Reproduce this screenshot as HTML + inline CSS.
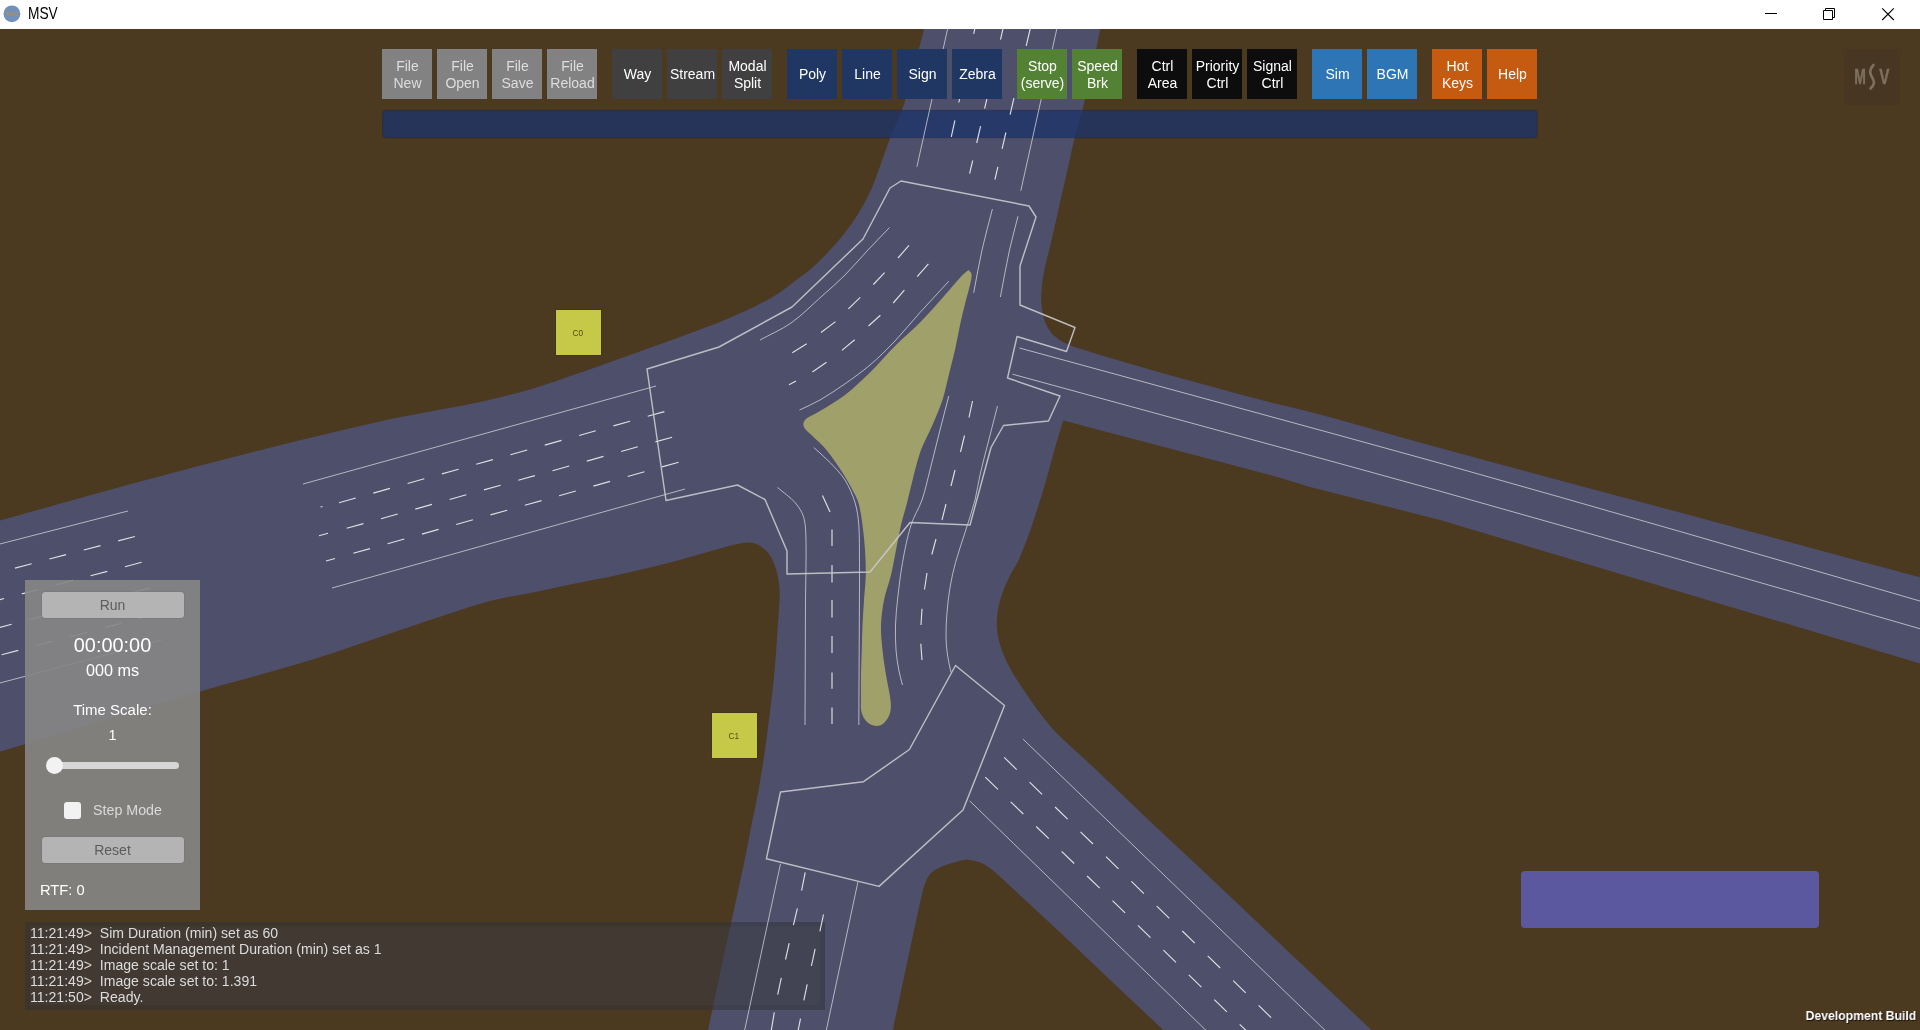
<!DOCTYPE html>
<html lang="en"><head><meta charset="utf-8"><title>MSV</title>
<style>
*{box-sizing:border-box;margin:0;padding:0}
html,body{width:1920px;height:1030px;overflow:hidden;background:#4b3920;font-family:"Liberation Sans",Arial,sans-serif}
#app{position:relative;width:1920px;height:1030px;overflow:hidden;background:#4b3920}
.scene{position:absolute;left:0;top:0}
#title{will-change:transform;position:absolute;left:0;top:0;width:1920px;height:29px;background:#fff}
#title .name{position:absolute;left:27.6px;top:4.3px;font-size:15.7px;line-height:20px;color:#000;transform:scaleX(0.875);transform-origin:left center}
#title svg{position:absolute;left:0;top:0}
.tb{will-change:transform;position:absolute;top:49px;width:50px;height:50px;display:flex;align-items:center;justify-content:center;text-align:center;font-size:14px;line-height:17px;color:#fff;padding-top:1px;padding-left:1px}
.g1{background:#828282;color:#dedede}
.g2{background:#404040}
.g3{background:#203764}
.g4{background:#548235}
.g5{background:#0d0d0d}
.g6{background:#2e75b6}
.g7{background:#c55a11}
#logo{will-change:transform;position:absolute;left:1844px;top:49px;width:56px;height:56px;background:#463622}
#panel{will-change:transform;position:absolute;left:25px;top:580px;width:175px;height:330px;background:rgba(133,133,134,0.915);color:#fff;text-align:center}
#panel .btn{position:absolute;left:16.5px;width:142px;height:27px;border-radius:3px;background:#b4b4b4;color:#5c5c5c;font-size:14px;line-height:27px;box-shadow:0 0 1px rgba(60,60,60,.6)}
#panel .t{position:absolute;left:0;width:175px;white-space:nowrap}
#log{will-change:transform;position:absolute;left:25px;top:922px;width:800px;height:88px}
#log .tx{position:absolute;left:5px;top:3px;font-size:14.08px;line-height:16px;color:#dcdcdc;white-space:pre}
#pbox{position:absolute;left:1521.2px;top:871.3px;width:297.5px;height:57px;border-radius:4px;background:#5c58a0}
#dev{will-change:transform;position:absolute;right:3.5px;top:1006.6px;font-size:13.5px;line-height:18px;font-weight:bold;color:#fff;text-shadow:1px 1px 1px rgba(0,0,0,.7);transform:scaleX(0.905);transform-origin:right center;white-space:nowrap}
.ysq{position:absolute;width:45px;height:45px;background:#c6c848;color:#50501a;font-size:8.3px;line-height:46px;text-align:center;padding-right:1.4px;will-change:transform;box-shadow:0 0 1px rgba(40,30,10,.9)}
</style></head>
<body><div id="app">
<svg class="scene" width="1920" height="1030" viewBox="0 0 1920 1030">
<path fill="#4e4f6b" d="M-5,522 C-3.3,521.5 -1.7,521.1 0,520.6 C43.3,508.5 86.6,495.9 130,484.2 C173.2,472.5 216.6,461.2 260,450.3 C303.4,439.5 346.9,428.7 390.6,419.1 C420.2,412.6 450.3,408.2 480,401.9 C496.8,398.3 513.5,394.2 530,389.4 C546.9,384.5 563.4,378.4 580,372.7 C596.7,366.9 613.3,360.9 630,355 C646.7,349 663.4,343.2 680,337 C696.9,330.7 713.9,324.7 730.5,317.6 C744.6,311.5 758.6,305.1 772,297.5 C780.5,292.6 788.1,286.2 795.9,280.3 C803,274.9 810.4,269.9 816.8,263.6 C827.5,253.1 837.7,242.1 846.8,230.2 C854.8,219.8 861.7,208.5 867.7,196.8 C873.2,186.1 876.7,174.6 881,163.4 C884.2,154.9 886.9,146.2 890.2,137.8 C894.5,126.8 899.9,116.2 903.8,105 C907.7,93.5 910.4,81.7 913.5,70 C917,56.7 920.3,43.3 923.8,30 C924.2,28.3 924.6,26.7 925,25 L1101.5,25 C1101,26.7 1100.4,28.3 1100,30 C1097.5,41.6 1095.5,53.4 1093,65 C1090.5,76.7 1087.9,88.4 1085,100 C1081.8,112.7 1077.9,125.1 1074.7,137.8 C1072.5,146.3 1070.8,154.9 1068.9,163.4 C1066.4,174.5 1063.8,185.7 1061.3,196.8 C1058.8,207.9 1056.3,219.1 1053.8,230.2 C1052.3,236.8 1050.8,243.4 1049.2,250 C1047.9,255.6 1046.3,261.1 1045.1,266.7 C1043.9,272.2 1042.8,277.8 1042.1,283.4 C1041.5,288.9 1041,294.5 1041.2,300.1 C1041.4,305.7 1042.3,311.3 1043.4,316.8 C1044,319.7 1045.1,322.5 1046.4,325.1 C1047.9,328.1 1049.6,331 1051.8,333.5 C1054.2,336.1 1057.1,338.3 1060.1,340.2 C1063.2,342.2 1066.6,343.8 1070.1,345.2 C1075,347.2 1080.2,348.6 1085.2,350.2 C1094.1,353 1103,355.9 1111.9,358.6 C1121.6,361.5 1131.4,364.1 1141.1,366.9 C1160.9,372.5 1180.6,378.1 1200.4,383.6 C1221,389.3 1241.5,395 1262.2,400.3 C1281.4,405.3 1300.8,409.4 1320,414.5 C1360.1,425.3 1399.9,437.1 1440,448 C1519.9,469.8 1600,491 1680,512.5 C1761.7,534.5 1843.3,556.5 1925,578.5 L1925,665 L1920,663.6 L1440,520 L1310,487 L1280,477.7 L1063.2,420.5 L1063.2,420.5 C1060.3,430.4 1057.2,440.2 1054.4,450.1 C1051.2,461.2 1048.5,472.4 1045.2,483.5 C1041.9,494.7 1038.4,505.8 1034.8,516.9 C1032,525.3 1029.1,533.7 1026,542 C1023.7,548.1 1021.4,554.1 1018.6,560 C1015.9,565.7 1012.2,571 1009.4,576.7 C1006.7,582.1 1004.2,587.7 1002.2,593.4 C1000.3,598.8 998.9,604.4 998,610.1 C997.1,615.6 996.6,621.2 996.9,626.8 C997.2,632.4 998.2,638.1 999.7,643.5 C1001.3,649.2 1003.5,654.8 1006,660.2 C1008.7,666 1011.9,671.5 1015.2,676.9 C1018.6,682.6 1022.4,688.1 1026.1,693.6 C1029.9,699.2 1033.7,704.9 1037.8,710.3 C1043.4,717.6 1048.9,725.1 1055.3,731.7 C1067.3,744 1080.4,755 1092.9,766.8 C1104.7,777.9 1116.3,789.1 1128,800.2 C1139.7,811.3 1151.3,822.5 1163,833.6 C1174.9,844.8 1187,855.8 1198.9,867 C1227.7,894.1 1256.3,921.4 1285,948.5 C1313.8,975.7 1342.6,1002.8 1371.4,1030 C1373.2,1031.7 1374.9,1033.3 1376.7,1035 L1168.5,1035 C1166.7,1033.3 1165,1031.7 1163.2,1030 C1156.8,1023.9 1150.3,1017.8 1143.9,1011.7 C1127.2,995.9 1110.5,980.2 1093.8,964.4 C1082.7,953.9 1071.6,943.2 1060.4,932.7 C1049.3,922.3 1038.1,912.1 1027,901.8 C1018.6,894 1010.6,886 1002,878.4 C996.6,873.7 991.5,868.5 985.3,865 C980.2,862.1 974.4,860.4 968.6,859.7 C964.7,859.2 960.7,860.8 956.9,861.7 C952.4,862.8 947.9,864.2 943.5,865.9 C940,867.3 936.4,868.6 933.5,870.9 C930.7,873.1 928.4,876 926.8,879.2 C924.8,883.1 923.7,887.5 922.6,891.8 C921,897.8 919.8,904 918.5,910.1 C915.7,922.9 912.9,935.8 910.1,948.6 C905.6,969.6 901.2,990.7 896.7,1011.7 C895.4,1017.8 894.1,1023.9 892.8,1030 C892.4,1031.7 892.1,1033.3 891.7,1035 L707,1035 C707.3,1033.3 707.6,1031.7 708,1030 C714,1002 720,974 726,946 C732.1,917.9 738.4,889.8 744.3,861.7 C747,849 749.3,836.3 751.8,823.6 C754,812.5 756.5,801.4 758.5,790.2 C760.5,779.1 762.3,768 764,756.8 C765.7,745.7 767.1,734.5 768.5,723.4 C769.9,712.8 771.2,702.3 772.4,691.7 C773.2,684.6 774,677.4 774.6,670.3 C775.6,659.2 776.3,648 777.1,636.9 C777.8,626.9 778.6,616.8 779.1,606.8 C779.4,601.2 779.9,595.7 779.6,590.1 C779.3,584.5 778.4,578.9 777.1,573.4 C775.9,568.5 774.4,563.7 772.1,559.2 C770.4,555.8 768.1,552.8 765.4,550.1 C763,547.7 760.1,545.6 757,544.2 C754.4,543 751.5,542.6 748.7,542.5 C745.9,542.4 743.1,542.9 740.4,543.4 C735.9,544.2 731.4,545.2 727,546.4 C715.8,549.4 704.7,552.8 693.6,555.9 C682.5,559 671.4,562.3 660.2,565.1 C643.6,569.3 626.8,573 610.1,576.8 C606.8,577.5 603.4,577.9 600,578.6 C578,583.1 556,587.7 534,592.2 C518.7,595.3 503.1,597.4 488,601.6 C461.3,609.1 435.2,618.6 408.8,627.3 C374,638.8 339.5,651.3 304.4,662.1 C269.8,672.7 234.7,681.2 200,691.4 C133.2,711.1 66.7,731.6 0,751.7 C-1.7,752.2 -3.3,752.7 -5,753.2 Z"/>
<path fill="#a0a16a" d="M968.5,270 C969.5,271.3 971.3,272.3 971.5,274 C971.9,277.7 970.8,281.4 970,285 C968.9,290.1 967.3,295 966,300 C963.9,308.3 961.8,316.6 960,325 C958.2,333.3 956.9,341.7 955,350 C953.1,358.4 950.8,366.7 948.8,375 C946.7,383.3 945.2,391.8 942.5,400 C939.7,408.5 936,416.8 932.5,425 C928.9,433.4 924.2,441.4 921,450 C918,458.1 916,466.6 913.8,475 C911.3,484.3 909.4,493.7 907,503 C905.1,510.4 902.7,517.6 901,525 C899.1,533.3 897.7,541.7 896,550 C894.3,558.3 893,566.7 891,575 C889,583.4 885.7,591.5 884,600 C882.4,608.2 881.3,616.6 881,625 C880.7,633.3 881.7,641.7 882.5,650 C883.3,658.4 884.7,666.7 886,675 C887.3,683.4 889.6,691.6 890.5,700 C891,704.3 891.2,708.8 890,713 C888.9,716.7 886.8,720.4 884,723 C881.9,724.9 878.8,726.2 876,726 C872.7,725.8 869.4,724.3 867,722 C864.3,719.4 862.5,715.7 861.5,712 C860.4,708.1 861.1,704 861,700 C860.9,691.7 860.9,683.3 861,675 C861.1,666.7 861.5,658.3 861.8,650 C862,641.7 862.1,633.3 862.5,625 C862.9,616.7 863.5,608.3 864,600 C864.5,591.7 865.6,583.4 865.8,575 C865.9,566.7 865.5,558.3 865,550 C864.5,541.6 863.6,533.3 862.5,525 C861.5,517.6 860.6,510.1 858.5,503 C856.9,497.7 854,492.9 851.5,488 C849.2,483.6 846.7,479.2 844,475 C838.4,466.5 832.9,457.9 826.5,450 C822.4,444.9 817.2,440.7 812.5,436 C809.8,433.3 806.6,431.1 804.5,428 C803.5,426.6 803.1,424.7 803.5,423 C803.9,421.2 805,419.6 806.5,418.5 C810.7,415.5 815.6,413.7 820,411 C828.4,405.8 837.2,401 845,395 C853.9,388.2 862,380.3 870,372.5 C878.7,364 886.4,354.6 895,346 C903.1,337.9 912,330.7 920,322.5 C928.7,313.7 936.7,304.2 945,295 C950.9,288.4 956.4,281.5 962.5,275 C964.3,273.1 966.5,271.7 968.5,270 Z"/>
<rect x="382.6" y="110.3" width="1154.6" height="27.5" rx="3.2" ry="3.2" fill="rgb(30,51,104)" fill-opacity="0.8" stroke="rgb(25,30,50)" stroke-opacity="0.35" stroke-width="0.8"/>
<rect x="25" y="922" width="800" height="88" fill="rgb(50,50,55)" fill-opacity="0.53"/>
<rect x="30" y="926.6" width="790" height="78.4" fill="rgb(130,130,132)" fill-opacity="0.075"/>
<path fill="none" stroke="#e6e6ea" stroke-width="0.95" stroke-opacity="0.72" d="M303,484 L656,386 M332,588 L685,489 M-2,544.5 L128,511 M-2,683.5 L162,640 M947.8,28 L916.9,166.9 M1057,28 L1020.8,190.8 M1023.1,739.2 L1330,1035 M969.7,800.9 L1210.8,1035 M780.5,863.8 L743.6,1035 M857.9,882 L825.3,1035 M889.5,227.5 C882,235.3 874.4,243.1 867,251 C859.6,258.9 852.7,267.3 845,275 C837.7,282.3 829.8,289.1 822,296 C811.8,305.1 802.2,315.1 791,323 C781.4,329.8 770.3,334.3 760,340 M948.8,281.2 C939.2,291.7 929.5,302 920,312.5 C911.5,321.9 903.7,331.8 895,341 C887,349.4 878.8,357.5 870,365 C862.1,371.8 853.5,377.8 845,383.8 C836.9,389.4 828.6,395 820,400 C813.4,403.8 806.3,406.7 799.5,410 M992.4,209 C988.9,222.7 985.1,236.2 982,250 C978.8,264.2 976.5,278.5 973.7,292.8 M1018,216.3 C1015.2,227.5 1012,238.7 1009.5,250 C1006.1,265.6 1003.4,281.3 1000.4,297 M777.5,487.5 C783.3,492.5 789.9,496.7 795,502.5 C798.8,506.9 802.2,511.9 803.8,517.5 C806,525.6 805.8,534.1 806,542.5 C806.4,561.7 805.6,580.8 805.5,600 C805.3,641.7 805.2,683.3 805,725 M813.8,447.5 C819.2,452.5 824.9,457.2 830,462.5 C835.3,468 840.9,473.5 845,480 C849.3,487 852.6,494.7 855,502.5 C857.2,509.8 858.2,517.4 858.8,525 C859.7,537.5 859.3,550 859.5,562.5 C859.6,570.7 859.5,578.8 859.5,587 C859.3,633 859,679 858.8,725 M948.8,396 C945.8,407.3 942.9,418.7 940,430 C936.6,443.3 933.4,456.7 930,470 C927.4,480 925.4,490.2 922,500 C919,508.6 913.7,516.3 911,525 C907.2,537.2 904.8,549.9 902.5,562.5 C900.3,574.9 898.9,587.5 897.5,600 C896.6,608.3 895.8,616.6 895.5,625 C895.3,633.3 895.4,641.7 896,650 C896.5,656.7 897.5,663.4 898.8,670 C899.7,675.1 901.2,680 902.5,685 M997.5,406 C994.6,417.3 991.6,428.7 988.8,440 C985.8,451.7 982.7,463.3 980,475 C978.1,483.3 977.1,491.8 975,500 C972.1,511 968.4,521.7 965,532.5 C961.9,542.5 958.3,552.4 955.5,562.5 C953.3,570.7 951.4,579.1 950,587.5 C948.6,595.8 947.7,604.1 947,612.5 C946.3,620.8 945.9,629.2 946,637.5 C946.1,643.4 946.7,649.2 947.5,655 C948.3,660.9 949.8,666.7 951,672.5 M1019.5,348 C1089.7,367.2 1159.8,386.3 1230,405.5 C1300,424.7 1370.1,443.6 1440,463.2 C1520.1,485.6 1600.1,508.5 1680,531.5 C1761.7,555 1843.3,578.8 1925,602.5 M1012.5,374.2 C1083.7,393.7 1154.8,413 1226,432.5 C1297.3,452 1368.8,471.3 1440,491.2 C1520.1,513.6 1600,536.6 1680,559.5 C1761.7,582.9 1843.3,606.6 1925,630.2"/>
<path fill="none" stroke="#f2f2f4" stroke-width="1.15" stroke-opacity="0.88" d="M339,502.7 L355.7,498 M373.3,493.1 L390,488.4 M407.6,483.5 L424.3,478.8 M441.9,473.9 L458.6,469.2 M476.2,464.3 L492.9,459.6 M510.5,454.7 L527.2,450 M544.8,445.1 L561.5,440.4 M579.1,435.5 L595.8,430.8 M613.4,425.9 L630.1,421.2 M647.7,416.3 L664.4,411.6 M346.7,528.3 L363.4,523.6 M381,518.7 L397.7,514 M415.3,509.1 L432,504.4 M449.6,499.5 L466.3,494.8 M483.9,489.9 L500.6,485.2 M518.2,480.3 L534.9,475.6 M552.5,470.7 L569.2,466 M586.8,461.1 L603.5,456.4 M621.1,451.5 L637.8,446.8 M655.4,441.9 L672.1,437.2 M353.3,553.3 L370,548.6 M387.6,543.7 L404.3,539 M421.9,534.1 L438.6,529.4 M456.2,524.5 L472.9,519.8 M490.5,514.9 L507.2,510.2 M524.8,505.3 L541.5,500.6 M559.1,495.7 L575.8,491 M593.4,486.1 L610.1,481.4 M627.7,476.5 L644.4,471.8 M662,466.9 L678.7,462.2 M319,535.7 L328,533.2 M326,561 L335,558.5 M320.5,507 L322.5,506.5 M15,568.1 L31.7,563.7 M49.4,559 L66.1,554.6 M83.8,550 L100.5,545.6 M118.2,540.9 L134.9,536.5 M-12.6,602.9 L4.1,598.5 M21.8,593.9 L38.5,589.5 M56.2,584.8 L72.9,580.4 M90.6,575.8 L107.3,571.4 M125,566.7 L141.7,562.3 M-5,628.7 L11.7,624.3 M29.4,619.7 L46.1,615.3 M63.8,610.6 L80.5,606.2 M98.2,601.6 L114.9,597.2 M132.6,592.5 L149.3,588.1 M1.6,654.8 L18.3,650.4 M36,645.7 L52.7,641.3 M70.4,636.7 L87.1,632.3 M104.8,627.6 L121.5,623.2 M139.2,618.6 L155.9,614.2 M898,258 L909,245.4 M873.4,284.5 L884.6,272.6 M848.4,308.8 L860.2,297.3 M821,332.5 L835.5,321.6 M792.3,352.7 L806.7,343.7 M917.2,276.7 L928.4,263.9 M893.2,303 L904.4,290.2 M868.5,326 L880.4,315.2 M841.9,350.4 L854.7,339.8 M812.4,371.9 L826.5,362.3 M789,384.7 L796,381 M975,28 L973.7,33.9 M969.9,51.7 L966.3,68 M962.4,86 L958.8,102.5 M954.9,120.3 L951.3,136.8 M1004.3,23 L1000.5,39.7 M996.4,57.4 L992.6,74 M988.5,91.8 L984.6,108.6 M980.6,126.1 L976.7,143 M972.7,160.5 L969.6,173.7 M1030.4,28 L1026.2,45.9 M1022,63.8 L1018.2,80 M1013.9,98.2 L1010.1,114.7 M1005.9,132.5 L1002.1,148.8 M997.9,166.9 L994.9,179.5 M822.5,495.5 L830,512 M832,529.5 L832,546 M832,565 L832,582.5 M832,600 L832,617.5 M832,636 L832,653 M832,672.5 L832,688.8 M832,707.5 L832,724 M972.5,401 L969,417.5 M964.5,435.5 L960.5,452 M955,470 L951,486 M946,504 L942,520 M936,539 L931.8,554.5 M927,573 L924.5,589.5 M922,608.8 L921,625 M920.8,643.8 L922,660 M1004.2,757.4 L1016.7,769.6 M1029.6,782.2 L1042.1,794.4 M1055.1,807 L1067.6,819.2 M1080.5,831.8 L1093,844 M1106,856.6 L1118.5,868.8 M1131.4,881.4 L1143.9,893.6 M1156.8,906.2 L1169.3,918.4 M1182.3,931 L1194.8,943.2 M1207.7,955.8 L1220.2,968 M1233.2,980.6 L1245.7,992.8 M1258.6,1005.4 L1271.1,1017.6 M985.3,777.1 L997.9,789.3 M1010.7,801.8 L1023.3,814 M1036.2,826.5 L1048.8,838.7 M1061.6,851.3 L1074.2,863.5 M1087.1,876 L1099.7,888.2 M1112.5,900.7 L1125.1,912.9 M1137.9,925.4 L1150.5,937.6 M1163.4,950.1 L1176,962.3 M1188.8,974.9 L1201.4,987.1 M1214.3,999.6 L1226.9,1011.8 M1239.7,1024.3 L1252.3,1036.5 M805.2,872.3 L801.6,890.6 M797.4,908.3 L793.4,925.2 M789.2,943.2 L785.5,959.5 M781.3,977.8 L777.7,994.7 M774.3,1012.4 L770.5,1035 M823.5,914.5 L819.9,931.4 M815.1,948.8 L811.4,966 M807.2,984.3 L803.8,1000.3 M800.5,1018.6 L797.2,1035"/>
<path fill="none" stroke="#c9c9cc" stroke-width="1.45" stroke-linejoin="round" stroke-opacity="0.9" d="M647,369 L719,347 L792,307 L863,239 L890,188 L901,181 L1029,206 L1036,217 L1020,266 L1020,305 L1075,327.5 L1066.5,351.5 L1017,336.5 L1007.5,378 L1060,396 L1048.5,421 L1003.5,425.5 L991,447.5 L970,525 L910,522.5 L870,572 L787,574 L787,551 L765,499.5 L737.5,485 L666,500.5 Z M955.5,665.5 L1004.5,705.5 L963,810 L879,886.4 L766.4,858.8 L780.5,792 L863.5,781.7 L909.4,749.5 Z"/>
</svg>
<div class="tb g1" style="left:382px">File<br>New</div>
<div class="tb g1" style="left:437px">File<br>Open</div>
<div class="tb g1" style="left:492px">File<br>Save</div>
<div class="tb g1" style="left:547px">File<br>Reload</div>
<div class="tb g2" style="left:612px">Way</div>
<div class="tb g2" style="left:667px">Stream</div>
<div class="tb g2" style="left:722px">Modal<br>Split</div>
<div class="tb g3" style="left:787px">Poly</div>
<div class="tb g3" style="left:842px">Line</div>
<div class="tb g3" style="left:897px">Sign</div>
<div class="tb g3" style="left:952px">Zebra</div>
<div class="tb g4" style="left:1017px">Stop<br>(serve)</div>
<div class="tb g4" style="left:1072px">Speed<br>Brk</div>
<div class="tb g5" style="left:1137px">Ctrl<br>Area</div>
<div class="tb g5" style="left:1192px">Priority<br>Ctrl</div>
<div class="tb g5" style="left:1247px">Signal<br>Ctrl</div>
<div class="tb g6" style="left:1312px">Sim</div>
<div class="tb g6" style="left:1367px">BGM</div>
<div class="tb g7" style="left:1432px">Hot<br>Keys</div>
<div class="tb g7" style="left:1487px">Help</div>
<div id="logo"><svg width="56" height="56" viewBox="0 0 56 56">
<text x="10.3" y="35" font-family="Liberation Sans, sans-serif" font-weight="bold" font-size="21.6" fill="#7d705e" stroke="#7d705e" stroke-width="0.5" textLength="11.6" lengthAdjust="spacingAndGlyphs">M</text>
<text x="35.2" y="35" font-family="Liberation Sans, sans-serif" font-weight="bold" font-size="21.6" fill="#7d705e" stroke="#7d705e" stroke-width="0.5" textLength="10.2" lengthAdjust="spacingAndGlyphs">V</text>
<path d="M29.5,16 C24,22 26.5,26 29,30 C31,34 29.5,37 26.5,39.5" fill="none" stroke="#7d705e" stroke-width="2.6" stroke-linecap="round"/>
</svg></div>
<div class="ysq" style="left:556px;top:310px">C0</div>
<div class="ysq" style="left:712px;top:713px">C1</div>
<div id="panel">
<div class="btn" style="top:11.7px;height:26.5px">Run</div>
<div class="t" style="top:53px;font-size:19.9px;line-height:24px">00:00:00</div>
<div class="t" style="top:80px;font-size:16.2px;line-height:20px">000 ms</div>
<div class="t" style="top:120px;font-size:15px;line-height:20px">Time Scale:</div>
<div class="t" style="top:145px;font-size:14.5px;line-height:20px">1</div>
<div style="position:absolute;left:22px;top:181.5px;width:131.5px;height:7px;border-radius:3.5px;background:#d6d6d6"></div>
<div style="position:absolute;left:21px;top:176.5px;width:17px;height:17px;border-radius:50%;background:#f2f2f2"></div>
<div style="position:absolute;left:39px;top:221.5px;width:17px;height:17px;border-radius:3px;background:#f2f2f2"></div>
<div class="t" style="top:220px;left:68px;width:auto;text-align:left;font-size:14.25px;line-height:20px;color:#dadada">Step Mode</div>
<div class="btn" style="top:256.6px;height:26.5px">Reset</div>
<div class="t" style="top:300px;left:15px;width:auto;text-align:left;font-size:14.7px;line-height:20px">RTF: 0</div>
</div>
<div id="log"><div class="tx">11:21:49&gt;  Sim Duration (min) set as 60
11:21:49&gt;  Incident Management Duration (min) set as 1
11:21:49&gt;  Image scale set to: 1
11:21:49&gt;  Image scale set to: 1.391
11:21:50&gt;  Ready.</div></div>
<div id="pbox"></div>
<div id="dev">Development Build</div>
<div id="title"><svg width="1920" height="29" viewBox="0 0 1920 29">
<circle cx="11.9" cy="13.8" r="8.4" fill="#7191ba"/>
<text x="6.3" y="16.2" font-family="Liberation Sans, sans-serif" font-size="5.6" fill="#d08a3a">MSV</text>
<path d="M1765,13.5 H1777" stroke="#000" stroke-width="1" fill="none"/>
<path d="M1823.5,10.5 h9 v9 h-9 Z M1825.5,10.5 V8.5 H1834.5 V17.5 H1832.5" stroke="#000" stroke-width="1" fill="none"/>
<path d="M1882.2,8.4 L1893.8,20 M1893.8,8.4 L1882.2,20" stroke="#000" stroke-width="1.1" fill="none"/>
</svg><div class="name">MSV</div></div>
</div></body></html>
